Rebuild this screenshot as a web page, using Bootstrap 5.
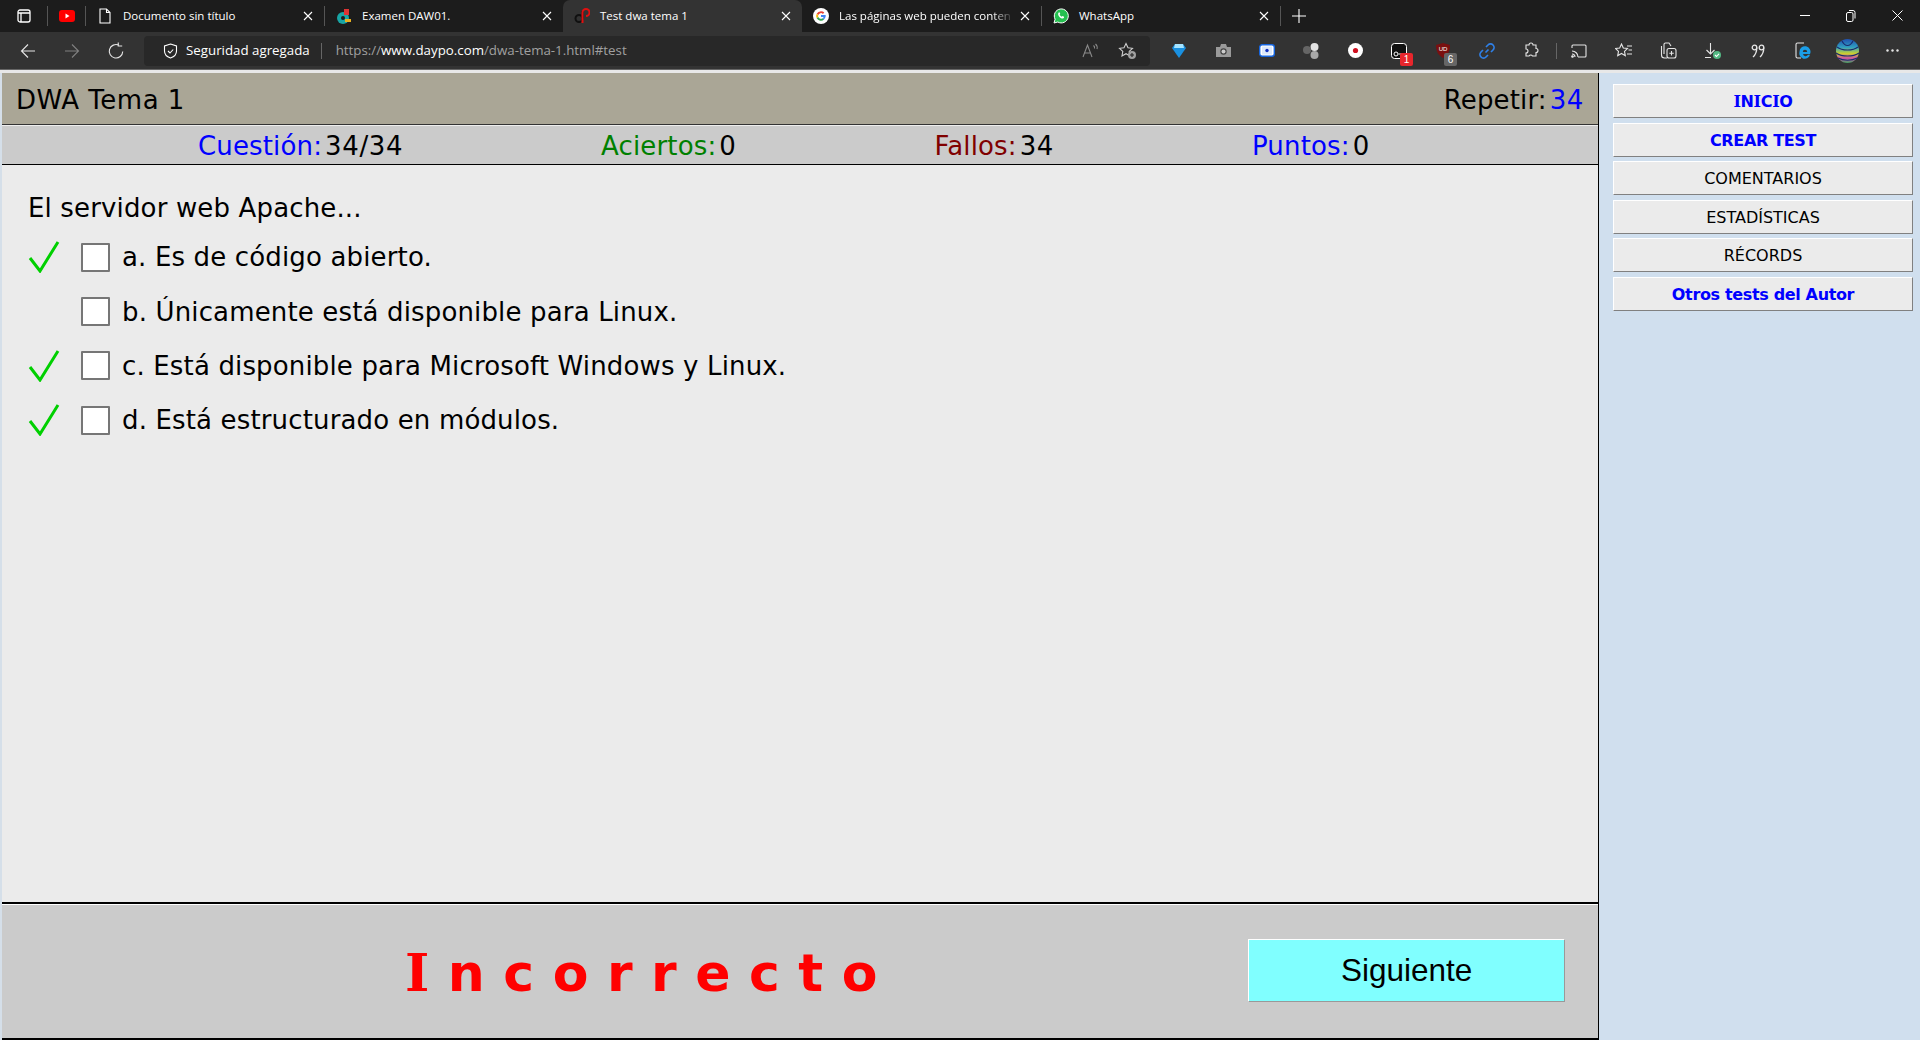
<!DOCTYPE html>
<html lang="es">
<head>
  <meta charset="UTF-8">
  <title>Test dwa tema 1</title>
  <link href="https://cdn.jsdelivr.net/npm/bootstrap@5.3.0/dist/css/bootstrap.min.css" rel="stylesheet">
  <style>
    html, body { height: 1040px; overflow: hidden; }
    body { background: #d0dfee; font-family: "DejaVu Sans", sans-serif; color: #000; }
    svg { display: block; flex: none; }

    /* browser chrome */
    .tabstrip { height: 32px; background: #1c1c1c; color: #fff; font-family: "Open Sans", "Liberation Sans", sans-serif; font-size: 11.5px; }
    .menu-slot { width: 47px; }
    .pin-slot { width: 37px; }
    .plus-slot { width: 36px; }
    .strip-sep { width: 1px; height: 20px; background: #555; flex: none; }
    .tab-item { width: 238px; height: 32px; padding: 0 11px; flex: none; }
    .tab-item.tab-wide { width: 239px; }
    .tab-item.tab-active { background: #333; border-radius: 7px 7px 0 0; }
    .tab-title { flex: 1; min-width: 0; padding-left: 10px; margin-right: 6px; white-space: nowrap; }
    .tab-fade { -webkit-mask-image: linear-gradient(to right, #000 88%, transparent); mask-image: linear-gradient(to right, #000 88%, transparent); }
    .win-btn { width: 46px; }
    .toolbar { height: 37px; background: #333; }
    .nav-btn { width: 44px; }
    .nav-first { margin-left: 6px; }
    .addr-bar { width: 1006px; height: 30px; margin-left: 6px; padding: 0 12px 0 19px; background: #282828; border-radius: 4px; color: #fff; font-family: "Open Sans", "Liberation Sans", sans-serif; font-size: 13.3px; white-space: nowrap; }
    .addr-sep { width: 1px; height: 16px; background: #666; margin: 0 14px 0 11px; }
    .addr-dim { color: #a0a0a0; }
    .addr-fav { margin-left: 19px; }
    .ext-group { margin-left: 7px; }
    .ext-btn { width: 44px; height: 37px; position: relative; }
    .ext-wide { width: 44.7px; }
    .ext-sep { width: 1px; height: 16px; background: #666; flex: none; margin-left: 3px; }
    .ext-badge { position: absolute; left: 23px; top: 21px; width: 13px; height: 13px; border-radius: 2px; font: 10px/13px "Liberation Sans", sans-serif; text-align: center; color: #fff; }
    .badge-red { background: #e8262c; }
    .badge-grey { background: #666; }
    .shell-gap { height: 4px; background: #e8e8e8; border-top: 1px solid #666; }

    /* page */
    .page-wrap { height: 967px; }
    .test-pane { width: 1599px; height: 967px; flex: none; border-left: 2px solid #d5dfe9; border-right: 1px solid #000; background: #ebebeb; letter-spacing: .15px; }
    .test-head { height: 52px; padding: 3px 14px 0 14px; background: #aaa696; border-bottom: 1px solid #333; font-size: 26px; }
    .test-title { letter-spacing: .5px; }
    .stat-bar { height: 40px; padding: 3px 0 0 196px; gap: 198px; background: #cbcbcb; border-top: 1px solid #eee; border-bottom: 1px solid #000; font-size: 26px; }
    .c-blue { color: #0000ff; }
    .c-green { color: #008000; }
    .c-red { color: #800000; }
    .kv-gap { margin-left: 3px; letter-spacing: .6px; }
    .question-area { height: 737px; padding: 25px 0 0 26px; font-size: 26px; }
    .question-text { height: 37px; line-height: 37px; margin-bottom: 3px; }
    .answer-row { height: 54.4px; }
    .answer-text { padding-top: 1px; }
    .tick-slot { width: 53px; flex: none; }
    .fake-check { width: 29px; height: 29px; flex: none; background: #fff; border: 2px solid #767676; border-radius: 1px; margin-right: 12px; }
    .result-bar { height: 138px; background: #cbcbcb; border-top: 2px solid #000; border-bottom: 2px solid #000; box-shadow: inset 0 1px 0 #fff; padding-right: 33px; letter-spacing: 0; }
    .verdict { width: 1247px; padding-left: 403px; margin-top: 4px; color: #f00; font-size: 52px; font-weight: 700; letter-spacing: 18.5px; white-space: nowrap; }
    .serif-i { font-family: "DejaVu Serif", serif; }
    .next-btn { width: 317px; height: 63px; margin-bottom: 2px; padding: 0; background: #80ffff; border: 1px solid; border-color: #fff #999 #999 #fff; border-radius: 0; color: #000; font: 31.5px "Liberation Sans", sans-serif; }

    /* side menu */
    .side-menu { flex: 1; padding: 11px 7px 0 14px; }
    .menu-link { display: block; height: 34px; margin-bottom: 4.6px; background: #ebebeb; border: 1px solid; border-color: #fff #808080 #808080 #fff; color: #000; font-size: 16px; line-height: 33px; text-align: center; text-decoration: none; }
    .menu-link.menu-strong { color: #0000ff; font-weight: 700; letter-spacing: -.35px; }
  </style>
</head>
<body>
  <div class="tabstrip d-flex align-items-center">
    <div class="menu-slot d-flex justify-content-center">
      <svg width="14" height="14" viewBox="0 0 14 14" fill="none" stroke="#fff" stroke-width="1.3"><rect x="1" y="1" width="12" height="12" rx="2"/><path d="M1 4h12M4 4v9"/></svg>
    </div>
    <div class="strip-sep"></div>
    <div class="pin-slot d-flex justify-content-center">
      <svg width="16" height="12" viewBox="0 0 16 12"><rect width="16" height="12" rx="3" fill="#f00"/><path d="M6.500 3.500v5l4-2.500z" fill="#fff"/></svg>
    </div>
    <div class="strip-sep"></div>

    <div class="tab-item d-flex align-items-center">
      <svg width="16" height="16" viewBox="0 0 16 16" fill="none" stroke="#fff" stroke-width="1.1"><path d="M3 1h6.500L13 4.500V15H3zM9.500 1v3.500H13"/></svg>
      <span class="tab-title">Documento sin título</span>
      <svg width="10" height="10" viewBox="0 0 10 10" stroke="#fff" stroke-width="1.1"><path d="M1 1l8 8M9 1l-8 8"/></svg>
    </div>
    <div class="strip-sep"></div>
    <div class="tab-item d-flex align-items-center">
      <svg width="16" height="16" viewBox="0 0 16 16"><circle cx="7" cy="10" r="6" fill="#18a5a5"/><rect x="8" y="1" width="5" height="6" fill="#d33"/><rect x="9" y="11" width="6" height="3" fill="#e8b020"/><circle cx="7" cy="10" r="2" fill="#1c1c1c"/></svg>
      <span class="tab-title">Examen DAW01.</span>
      <svg width="10" height="10" viewBox="0 0 10 10" stroke="#fff" stroke-width="1.1"><path d="M1 1l8 8M9 1l-8 8"/></svg>
    </div>
    <div class="tab-item tab-wide tab-active d-flex align-items-center">
      <svg width="16" height="16" viewBox="0 0 16 16" fill="none" stroke-width="2"><circle cx="5" cy="10.500" r="3.500" stroke="#111"/><path d="M8.500 3v7" stroke="#111"/><path d="M8.500 15V4.500a3.500 3.500 0 1 1 3.500 3.500" stroke="#e01010"/></svg>
      <span class="tab-title">Test dwa tema 1</span>
      <svg width="10" height="10" viewBox="0 0 10 10" stroke="#fff" stroke-width="1.1"><path d="M1 1l8 8M9 1l-8 8"/></svg>
    </div>
    <div class="tab-item tab-wide d-flex align-items-center">
      <svg width="16" height="16" viewBox="0 0 16 16"><circle cx="8" cy="8" r="8" fill="#fff"/><path d="M8 3.200a4.800 4.800 0 0 1 3.300 1.300l-1.400 1.400A2.800 2.800 0 0 0 5.300 7L3.700 5.800A4.800 4.800 0 0 1 8 3.200z" fill="#ea4335"/><path d="M3.700 5.800L5.300 7a2.800 2.800 0 0 0 0 2l-1.600 1.200a4.800 4.800 0 0 1 0-4.400z" fill="#fbbc05"/><path d="M3.700 10.200L5.300 9a2.800 2.800 0 0 0 4.300 1.300l1.500 1.200A4.800 4.800 0 0 1 3.700 10.200z" fill="#34a853"/><path d="M8 7h4.700a4.800 4.800 0 0 1-1.600 4.500L9.600 10.300A2 2 0 0 0 10.600 9H8z" fill="#4285f4"/></svg>
      <span class="tab-title tab-fade">Las páginas web pueden conten</span>
      <svg width="10" height="10" viewBox="0 0 10 10" stroke="#fff" stroke-width="1.1"><path d="M1 1l8 8M9 1l-8 8"/></svg>
    </div>
    <div class="strip-sep"></div>
    <div class="tab-item d-flex align-items-center">
      <svg width="16" height="16" viewBox="0 0 16 16"><path d="M1 15l1.100-3.800A7 7 0 1 1 4.800 14z" fill="#25c050" stroke="#fff" stroke-width="1"/><path d="M5.700 4.500c-1 1-.7 2.800.8 4.400s3.400 2.200 4.400 1.200l.2-1.300-1.700-.8-.7.700c-.9-.3-1.800-1.200-2.100-2.100l.7-.7-.8-1.700z" fill="#fff"/></svg>
      <span class="tab-title">WhatsApp</span>
      <svg width="10" height="10" viewBox="0 0 10 10" stroke="#fff" stroke-width="1.1"><path d="M1 1l8 8M9 1l-8 8"/></svg>
    </div>
    <div class="strip-sep"></div>
    <div class="plus-slot d-flex justify-content-center">
      <svg width="14" height="14" viewBox="0 0 14 14" stroke="#fff" stroke-width="1.1"><path d="M7 0v14M0 7h14"/></svg>
    </div>
    <div class="ms-auto d-flex">
      <div class="win-btn d-flex justify-content-center"><svg width="10" height="10" viewBox="0 0 10 10" stroke="#fff"><path d="M0 5.500h10"/></svg></div>
      <div class="win-btn d-flex justify-content-center"><svg width="10" height="12" viewBox="0 0 10 12" fill="none" stroke="#fff"><rect x=".5" y="2.500" width="6.500" height="9" rx="1.500"/><path d="M3 .5h4a2 2 0 0 1 2 2v6"/></svg></div>
      <div class="win-btn d-flex justify-content-center"><svg width="11" height="11" viewBox="0 0 11 11" stroke="#fff"><path d="M.5.500l10 10M10.500.500l-10 10"/></svg></div>
    </div>
  </div>

  <div class="toolbar d-flex align-items-center">
    <div class="nav-btn nav-first d-flex justify-content-center"><svg width="16" height="16" viewBox="0 0 16 16" fill="none" stroke="#e6e6e6" stroke-width="1.1"><path d="M15 8H1.500M8 1.500L1.500 8 8 14.500"/></svg></div>
    <div class="nav-btn d-flex justify-content-center"><svg width="16" height="16" viewBox="0 0 16 16" fill="none" stroke="#808080" stroke-width="1.1"><path d="M1 8h13.500M8 1.500L14.500 8 8 14.500"/></svg></div>
    <div class="nav-btn d-flex justify-content-center"><svg width="18" height="18" viewBox="0 0 16 16" fill="none" stroke="#e6e6e6" stroke-width="1"><path d="M14 8.500A6 6 0 1 1 10.500 2.800M10 .5v3h3.500"/></svg></div>
    <div class="addr-bar d-flex align-items-center">
      <svg class="me-2" width="15" height="16" viewBox="0 0 15 16" fill="none" stroke="#fff" stroke-width="1.1"><path d="M7.500 1l6 2v5c0 3.500-3 6-6 7-3-1-6-3.500-6-7V3z"/><path d="M5 8l2 2 3.200-3.500"/></svg>
      <span>Seguridad agregada</span>
      <span class="addr-sep"></span>
      <span class="addr-dim">https://</span><span>www.daypo.com</span><span class="addr-dim">/dwa-tema-1.html#test</span>
      <svg class="ms-auto" width="17" height="16" viewBox="0 0 17 16" fill="none" stroke="#8a8a8a" stroke-width="1.1"><path d="M1 14L5.500 2 10 14M2.800 10h5.400M11.500 2.500a3 3 0 0 1 1 3M13.500 1a5 5 0 0 1 1.500 5"/></svg>
      <svg class="addr-fav" width="20" height="18" viewBox="0 0 20 18"><path d="M8 1.500l2 4.200 4.500.6-3.300 3.100.8 4.500L8 11.700 4 13.900l.8-4.500L1.500 6.300 6 5.700z" fill="none" stroke="#d0d0d0" stroke-width="1.1"/><circle cx="14" cy="13" r="4" fill="#a0a0a0"/><path d="M14 11v4M12 13h4" stroke="#222" stroke-width="1.1"/></svg>
    </div>

    <div class="ext-group d-flex align-items-center">
      <div class="ext-btn d-flex align-items-center justify-content-center"><svg width="14" height="15" viewBox="0 0 14 15"><path d="M3 1h8l3 4-7 10L0 5z" fill="#1a90e0"/><path d="M3 1h8l1 4H2z" fill="#a5e4ff"/></svg></div>
      <div class="ext-btn d-flex align-items-center justify-content-center"><svg width="15" height="13" viewBox="0 0 15 13"><path d="M0 3h4l1-3h5l1 3h4v10H0z" fill="#9a9a9a"/><circle cx="7.500" cy="7.500" r="3.200" fill="#444"/><circle cx="7.500" cy="7.500" r="2" fill="#ccc"/></svg></div>
      <div class="ext-btn d-flex align-items-center justify-content-center"><svg width="16" height="13" viewBox="0 0 16 13"><rect x=".7" y=".7" width="14.600" height="11.600" rx="2.500" fill="#fff" stroke="#1565e0" stroke-width="1.400"/><rect x="3" y="2.500" width="10" height="8" fill="#dce8fa"/><circle cx="8" cy="6.500" r="1.700" fill="#1030c0"/></svg></div>
      <div class="ext-btn d-flex align-items-center justify-content-center"><svg width="17" height="16" viewBox="0 0 17 16"><circle cx="11.500" cy="4" r="4" fill="#e2e2e2"/><circle cx="4" cy="7" r="4" fill="#666"/><circle cx="11.500" cy="12" r="4" fill="#a8a8a8"/></svg></div>
      <div class="ext-btn d-flex align-items-center justify-content-center"><svg width="15" height="15" viewBox="0 0 15 15"><circle cx="7.500" cy="7.500" r="7.500" fill="#fff"/><circle cx="7.500" cy="7.500" r="2.600" fill="#d01020"/></svg></div>
      <div class="ext-btn d-flex align-items-center justify-content-center"><svg width="16" height="16" viewBox="0 0 16 16" fill="none" stroke="#fff"><rect x=".5" y=".5" width="15" height="15" rx="3" fill="#111"/><circle cx="5" cy="11" r="2"/><path d="M7.500 11h4"/></svg><span class="ext-badge badge-red">1</span></div>
      <div class="ext-btn d-flex align-items-center justify-content-center"><svg width="14" height="15" viewBox="0 0 14 15"><path d="M7 0l7 2c0 6-2 10-7 13C2 12 0 8 0 2z" fill="#7a1010"/><text x="7" y="8" font-size="6" fill="#fff" text-anchor="middle" font-family="Liberation Sans">UD</text></svg><span class="ext-badge badge-grey">6</span></div>
      <div class="ext-btn d-flex align-items-center justify-content-center"><svg width="16" height="16" viewBox="0 0 16 16" fill="none" stroke="#2f80e8" stroke-width="1.700"><path d="M6.500 9.500l3-3M7 4l2-2a3 3 0 0 1 5 5l-2 2M9 12l-2 2a3 3 0 0 1-5-5l2-2"/></svg></div>
      <div class="ext-btn d-flex align-items-center justify-content-center"><svg width="16" height="17" viewBox="0 0 16 17" fill="none" stroke="#e6e6e6" stroke-width="1.1"><path d="M6 3a2 2 0 0 1 4 0h3v3.500a2 2 0 0 1 0 4V14H9.500a2 2 0 0 0-3.500 0H3v-3a2 2 0 0 0 0-4V3z"/></svg></div>
      <span class="ext-sep"></span>
      <div class="ext-btn ext-wide d-flex align-items-center justify-content-center"><svg width="16" height="14" viewBox="0 0 16 14" fill="none" stroke="#e6e6e6" stroke-width="1.1"><path d="M1 4V2a1 1 0 0 1 1-1h12a1 1 0 0 1 1 1v10a1 1 0 0 1-1 1H7M1 7a6 6 0 0 1 6 6M1 10a3 3 0 0 1 3 3"/><circle cx="1.500" cy="12.500" r=".8" fill="#e6e6e6"/></svg></div>
      <div class="ext-btn ext-wide d-flex align-items-center justify-content-center"><svg width="18" height="16" viewBox="0 0 18 16" fill="none" stroke="#e6e6e6" stroke-width="1.1"><path d="M6.500 1l1.800 4 4.200.5-3 2.900.8 4.300-3.800-2.200-3.800 2.200.8-4.300-3-2.900L4.700 5zM12 3h5M13.500 7h3.500M12 11h5"/></svg></div>
      <div class="ext-btn ext-wide d-flex align-items-center justify-content-center"><svg width="17" height="17" viewBox="0 0 17 17" fill="none" stroke="#e6e6e6" stroke-width="1.1"><path d="M4 12V2.500A1.500 1.500 0 0 1 5.500 1H9l2 3M1.500 4v9a3 3 0 0 0 3 3H7"/><rect x="7" y="6.500" width="9" height="9.500" rx="2"/><path d="M11.500 9v4.500M9.300 11.300h4.500"/></svg></div>
      <div class="ext-btn ext-wide d-flex align-items-center justify-content-center"><svg width="18" height="18" viewBox="0 0 18 18" fill="none" stroke="#e6e6e6" stroke-width="1.1"><path d="M6.500 1v11M2.500 8l4 4 4-4M1 15.500h6"/><circle cx="13" cy="13" r="4" fill="#53b883" stroke="none"/><path d="M11 13l1.500 1.500 2.500-2.700" stroke="#fff"/></svg></div>
      <div class="ext-btn ext-wide d-flex align-items-center justify-content-center"><svg width="14" height="14" viewBox="0 0 14 14" fill="none" stroke="#e6e6e6" stroke-width="1.3"><circle cx="3.500" cy="3.500" r="2.300"/><path d="M5.800 3.500c0 4-1 7-3.800 9.500"/><circle cx="10.500" cy="3.500" r="2.300"/><path d="M12.800 3.500c0 4-1 7-3.800 9.500"/></svg></div>
      <div class="ext-btn ext-wide d-flex align-items-center justify-content-center"><svg width="18" height="18" viewBox="0 0 18 18"><path d="M10 1H3.500A1.500 1.500 0 0 0 2 2.500v12A1.500 1.500 0 0 0 3.500 16H7" fill="none" stroke="#e6e6e6" stroke-width="1.1"/><path d="M5.500 10a5.500 5.500 0 1 1 10.500 2h-7a2.700 2.700 0 0 0 5 .8h2a5 5 0 0 1-10.500-2.800zm3.300 0h4.400a2.200 2.200 0 0 0-4.400 0z" fill="#1b9ee8"/></svg></div>
      <div class="ext-btn ext-wide d-flex align-items-center justify-content-center"><svg width="23" height="24" viewBox="0 0 23 24"><defs><linearGradient id="orb" x1="0" y1="0" x2="0" y2="1"><stop offset="0" stop-color="#2050b0"/><stop offset=".35" stop-color="#30a0c0"/><stop offset=".6" stop-color="#c8d030"/><stop offset=".8" stop-color="#d050a0"/><stop offset="1" stop-color="#40a060"/></linearGradient></defs><ellipse cx="11.500" cy="12" rx="11.500" ry="12" fill="url(#orb)"/><path d="M1 8c5 4 16 4 21 0M0 14c6 4 17 4 23 0M2 19c5 3 14 3 19 0M6 2c3 6 8 6 11 0" fill="none" stroke="#1a2a70" stroke-width="1.200"/></svg></div>
      <div class="ext-btn ext-wide d-flex align-items-center justify-content-center"><svg width="13" height="3" viewBox="0 0 13 3" fill="#e6e6e6"><circle cx="1.500" cy="1.500" r="1.200"/><circle cx="6.500" cy="1.500" r="1.200"/><circle cx="11.500" cy="1.500" r="1.200"/></svg></div>
    </div>
  </div>
  <div class="shell-gap"></div>

  <div class="page-wrap d-flex">
    <main class="test-pane">
      <div class="test-head d-flex justify-content-between align-items-center">
        <span class="test-title">DWA Tema 1</span>
        <span>Repetir:<span class="c-blue kv-gap">34</span></span>
      </div>
      <div class="stat-bar d-flex align-items-center">
        <div><span class="c-blue">Cuestión:</span><span class="kv-gap">34/34</span></div>
        <div><span class="c-green">Aciertos:</span><span class="kv-gap">0</span></div>
        <div><span class="c-red">Fallos:</span><span class="kv-gap">34</span></div>
        <div><span class="c-blue">Puntos:</span><span class="kv-gap">0</span></div>
      </div>
      <div class="question-area">
        <div class="question-text">El servidor web Apache...</div>
        <div id="answers"></div>
      </div>
      <div class="result-bar d-flex align-items-center">
        <div class="verdict"><span class="serif-i">I</span>ncorrecto</div>
        <button type="button" class="btn next-btn">Siguiente</button>
      </div>
    </main>
    <nav class="side-menu">
      <a class="menu-link menu-strong" href="#"><span class="serif-i">I</span>N<span class="serif-i">I</span>C<span class="serif-i">I</span>O</a>
      <a class="menu-link menu-strong" href="#">CREAR TEST</a>
      <a class="menu-link" href="#">COMENTARIOS</a>
      <a class="menu-link" href="#">ESTADÍSTICAS</a>
      <a class="menu-link" href="#">RÉCORDS</a>
      <a class="menu-link menu-strong" href="#">Otros tests del Autor</a>
    </nav>
  </div>

  <script src="https://cdn.jsdelivr.net/npm/bootstrap@5.3.0/dist/js/bootstrap.bundle.min.js"></script>
  <script>
    const answers = [
      { text: 'a. Es de código abierto.', ok: true },
      { text: 'b. Únicamente está disponible para Linux.', ok: false },
      { text: 'c. Está disponible para Microsoft Windows y Linux.', ok: true },
      { text: 'd. Está estructurado en módulos.', ok: true }
    ];
    const tick = '<svg width="32" height="32" viewBox="0 0 32 32" fill="none" stroke="#00d000" stroke-width="3"><path d="M2 17l10 13L30 1"/></svg>';
    let content = '';
    answers.forEach((a) => {
      content += `
        <div class="answer-row d-flex align-items-center">
          <div class="tick-slot">${a.ok ? tick : ''}</div>
          <div class="fake-check"></div>
          <span class="answer-text">${a.text}</span>
        </div>`;
    });
    document.getElementById('answers').innerHTML = content;
  </script>
</body>
</html>
